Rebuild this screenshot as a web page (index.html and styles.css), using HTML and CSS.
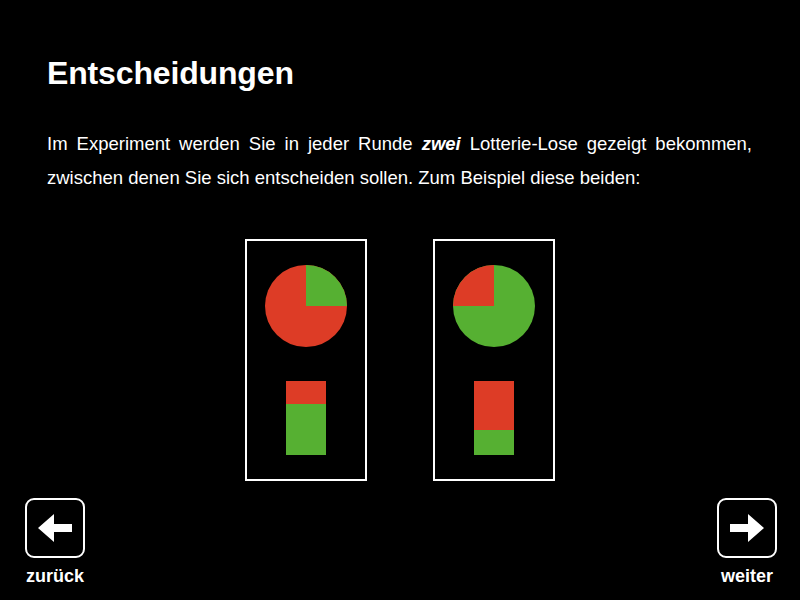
FILE: index.html
```html
<!DOCTYPE html>
<html lang="de">
<head>
<meta charset="utf-8">
<title>Entscheidungen</title>
<link rel="stylesheet" href="styles.css">
</head>
<body>
<div class="page">
	<div class="content">
		<h1 class="title">Entscheidungen</h1>
		<p class="intro">Im Experiment werden Sie in jeder Runde <b><i>zwei</i></b> Lotterie-Lose gezeigt bekommen, zwischen denen Sie sich entscheiden sollen. Zum Beispiel diese beiden:</p>
	</div>

	<div class="lotteries">
		<div class="lottery">
			<svg class="pie" width="82" height="82" viewBox="0 0 82 82">
				<circle cx="41" cy="41" r="41" fill="#dd3c26"/>
				<path d="M41 41V0A41 41 0 0 1 82 41Z" fill="#56b032"/>
			</svg>
			<div class="bar">
				<div class="bar-red bar-red-small"></div>
				<div class="bar-green"></div>
			</div>
		</div>
		<div class="lottery">
			<svg class="pie" width="82" height="82" viewBox="0 0 82 82">
				<circle cx="41" cy="41" r="41" fill="#56b032"/>
				<path d="M41 41V0A41 41 0 0 0 0 41Z" fill="#dd3c26"/>
			</svg>
			<div class="bar">
				<div class="bar-red bar-red-big"></div>
				<div class="bar-green"></div>
			</div>
		</div>
	</div>

	<div class="nav">
		<div class="nav-item">
			<div class="nav-btn">
				<svg width="34" height="28" viewBox="0 0 34 28"><path d="M0 14L16 0V10H34V18H16V28Z" fill="#fff"/></svg>
			</div>
			<span class="nav-label">zurück</span>
		</div>
		<div class="nav-item">
			<div class="nav-btn">
				<svg width="34" height="28" viewBox="0 0 34 28"><path d="M34 14L18 0V10H0V18H18V28Z" fill="#fff"/></svg>
			</div>
			<span class="nav-label">weiter</span>
		</div>
	</div>
</div>
</body>
</html>
```

FILE: styles.css
```css
* {margin:0; padding:0; box-sizing:border-box;}

body {background:#000; color:#fff; font-family:"Liberation Sans", Arial, sans-serif;}

.page {width:800px; height:600px; display:flex; flex-direction:column; overflow:hidden;}

.content {padding:54px 48px 0 47px;}
.title {font-size:32px; line-height:38px; font-weight:bold; letter-spacing:-0.15px;}
.intro {margin-top:35px; font-size:18.5px; line-height:34px; text-align:justify;}

.lotteries {display:flex; justify-content:center; gap:66px; margin-top:44px;}
.lottery {width:122px; height:242px; border:2px solid #fff; display:flex; flex-direction:column; align-items:center; padding-top:24px;}
.pie {display:block;}

.bar {width:40px; height:74px; margin-top:34px; display:flex; flex-direction:column;}
.bar-red {background:#dd3c26;}
.bar-red-small {height:23px;}
.bar-red-big {height:49px;}
.bar-green {background:#56b032; flex:1;}

.nav {display:flex; justify-content:space-between; padding:0 13px 0 15px; margin-top:17px;}
.nav-item {width:80px; display:flex; flex-direction:column; align-items:center;}
.nav-btn {width:60px; height:60px; border:2px solid #fff; border-radius:9px; display:flex; align-items:center; justify-content:center;}
.nav-label {margin-top:8px; font-size:18px; line-height:21px; font-weight:bold;}
```
